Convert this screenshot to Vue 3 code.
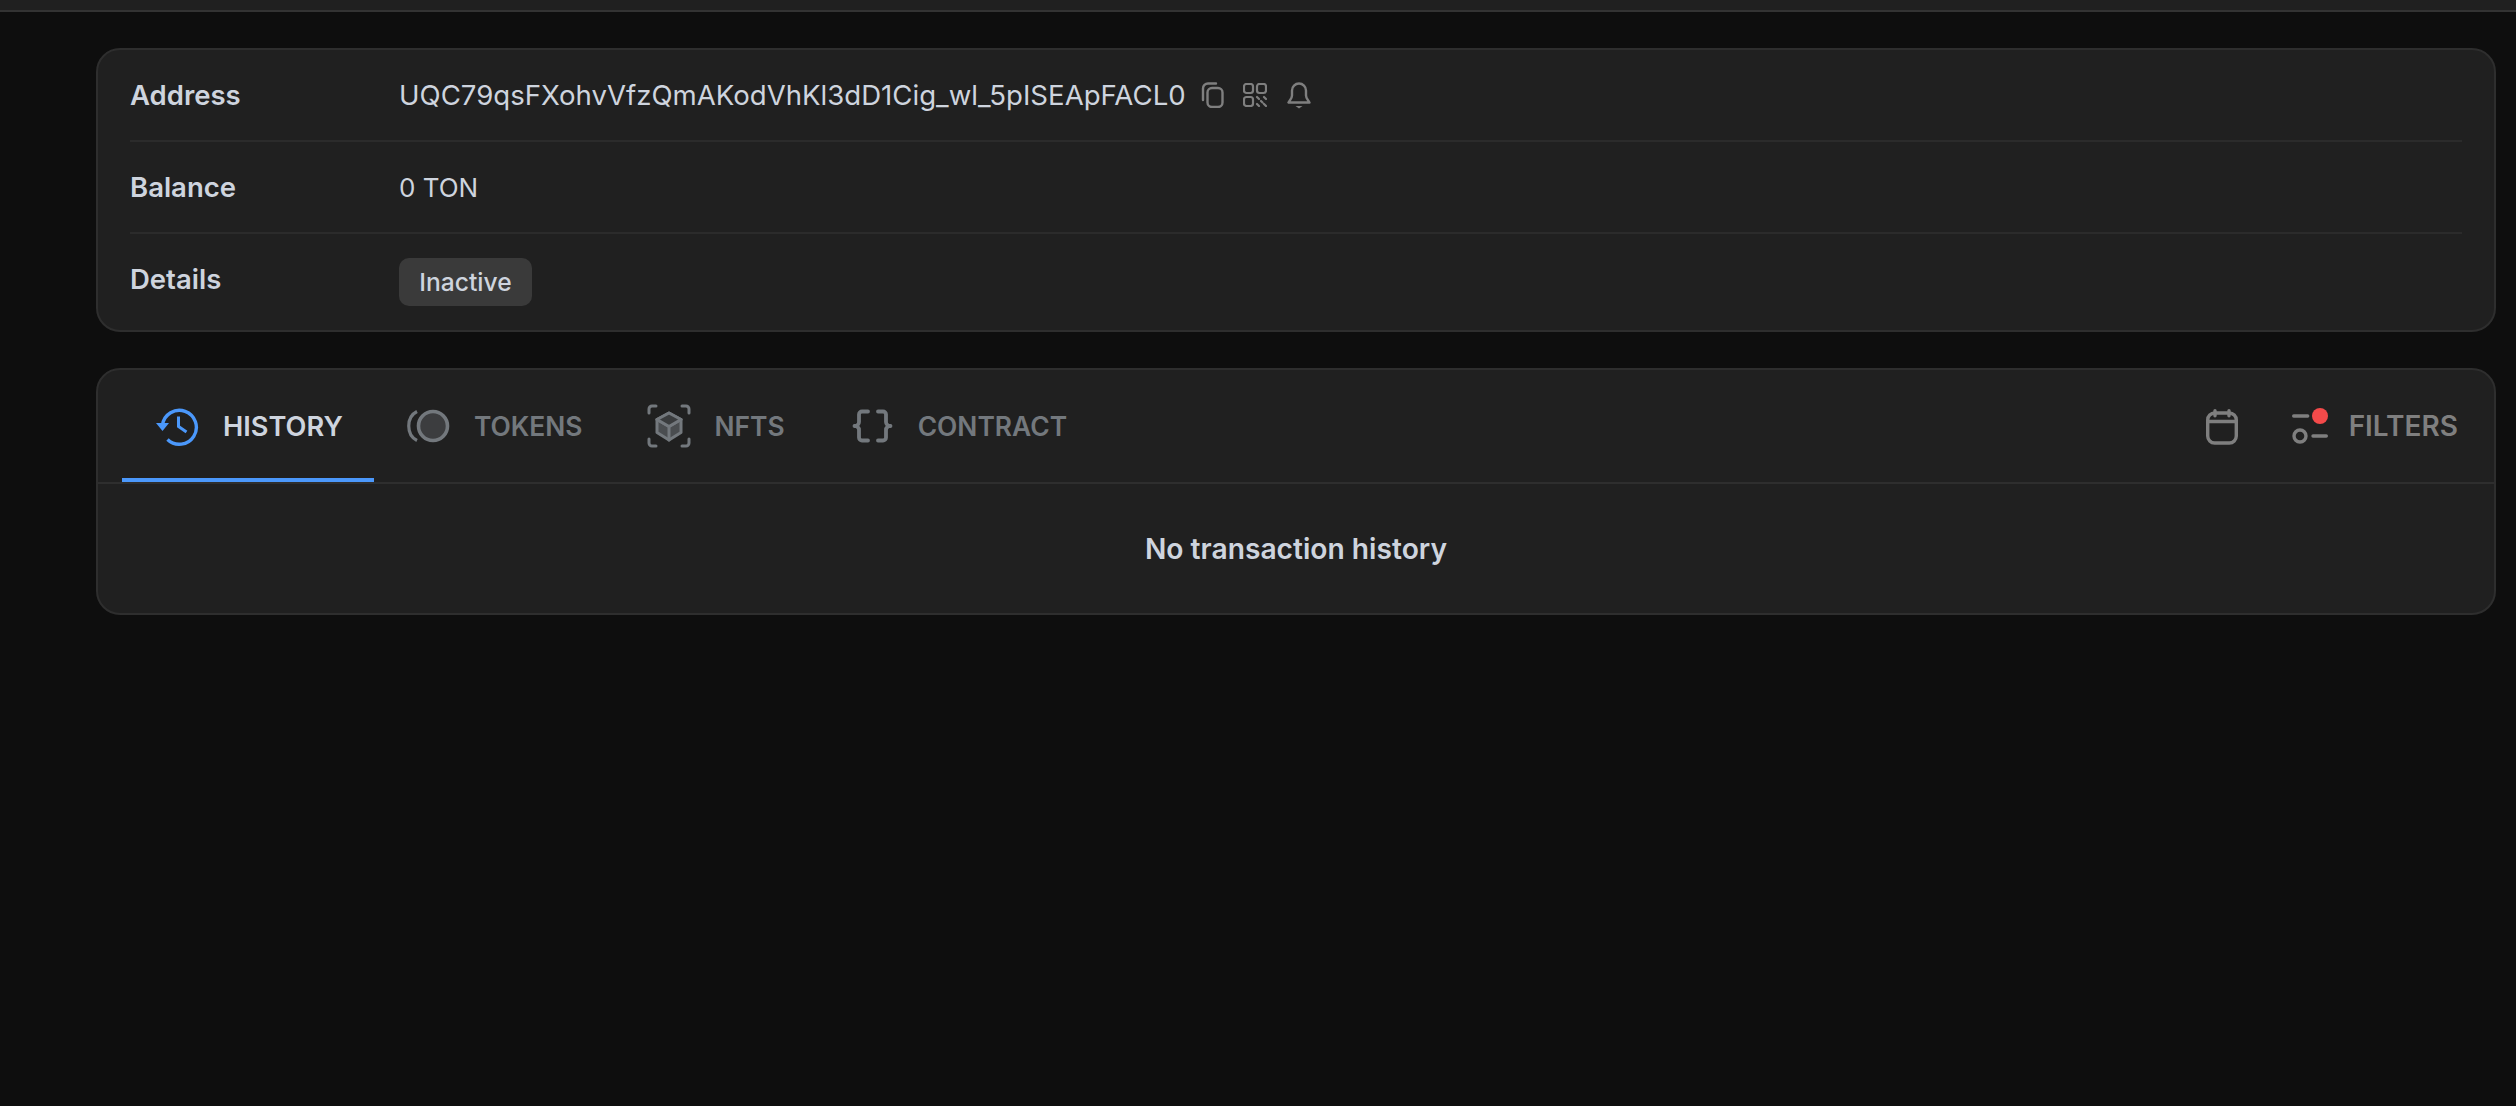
<template>
  <div class="page">
    <div class="topbar"></div>
    <main class="content">
      <section class="card info">
        <div class="row">
          <div class="label">Address</div>
          <div class="value">
            <span>{{ address }}</span>
            <span class="actions">
              <svg class="copy" width="26" height="26" viewBox="0 0 26 26" fill="none" stroke="#7f7f7f" stroke-width="2.4" stroke-linecap="round">
                <rect x="7.5" y="6" width="15" height="19" rx="4.5"/>
                <path d="M3 18V6.500A5 5 0 0 1 8 1.500h8"/>
              </svg>
              <svg class="qr" width="24" height="24" viewBox="0 0 24 24" fill="none" stroke="#7f7f7f" stroke-width="2.2">
                <rect x="1" y="1" width="9" height="9" rx="2.500"/>
                <rect x="14" y="1" width="9" height="9" rx="2.500"/>
                <rect x="1" y="14" width="9" height="9" rx="2.500"/>
                <path d="M14 14l2 2M21 14l2 2M14 21l2 2M21 21l2 2M18 18l1.500 1.500" stroke-linecap="round"/>
              </svg>
              <svg class="bell" width="24" height="27" viewBox="0 0 24 27" fill="none" stroke="#7f7f7f" stroke-width="2.400" stroke-linejoin="round">
                <path d="M12 1.500a7 7 0 0 0-7 7v5c0 3-2 4.500-3.500 7h21c-1.500-2.500-3.500-4-3.500-7v-5a7 7 0 0 0-7-7z"/>
                <path d="M8.500 24h7l-3.500 2.500z" fill="#7f7f7f" stroke="none"/>
              </svg>
            </span>
          </div>
        </div>
        <div class="row">
          <div class="label">Balance</div>
          <div class="value balance">0 TON</div>
        </div>
        <div class="row">
          <div class="label">Details</div>
          <div class="value"><span class="badge">Inactive</span></div>
        </div>
      </section>

      <section class="card history">
        <header class="tabs">
          <div class="tab active">
            <svg class="tab-icon" width="44" height="44" viewBox="0 0 44 44" fill="none" stroke="#4b98fb" stroke-width="3.400">
              <path d="M7.500 21A17 17 0 1 1 12.500 35.500"/>
              <path d="M1 19h13l-6.500 8z" fill="#4b98fb" stroke="none"/>
              <path d="M23.500 12.500v10l8 5.500" stroke-width="3"/>
            </svg>
            <span>HISTORY</span>
          </div>
          <div class="tab">
            <svg class="tab-icon" width="44" height="44" viewBox="0 0 44 44" fill="none" stroke="#73787d">
              <circle cx="27" cy="22" r="14.500" fill="#3c3d3f" stroke-width="3.600"/>
              <path d="M11 7.500C0 13 0 31 11 36.500" stroke-width="3.200"/>
            </svg>
            <span>TOKENS</span>
          </div>
          <div class="tab">
            <svg class="tab-icon" width="44" height="44" viewBox="0 0 44 44" fill="none" stroke="#73787d" stroke-width="3" stroke-linecap="round" stroke-linejoin="round">
              <path d="M2 9V5a3 3 0 0 1 3-3h4M35 2h4a3 3 0 0 1 3 3v4M2 35v4a3 3 0 0 0 3 3h4M42 35v4a3 3 0 0 1-3 3h-4"/>
              <path d="M22 9l12 6.500v13L22 36 10 28.500v-13z" fill="#4a4d50"/>
              <path d="M10 15.500l12 7 12-7M22 22.500V36"/>
              <path d="M22 9l12 6.500-12 7-12-7z" fill="#3a3c3e"/>
            </svg>
            <span>NFTS</span>
          </div>
          <div class="tab contract">
            <svg class="tab-icon" width="44" height="44" viewBox="0 0 44 44" fill="none" stroke="#73787d" stroke-width="3.800" stroke-linecap="round" stroke-linejoin="round">
              <path d="M18 7.500H12a3 3 0 0 0-3 3v7.500a4 4 0 0 1-4.500 4 4 4 0 0 1 4.500 4v7.500a3 3 0 0 0 3 3H18"/>
              <path d="M28 7.500h5a3 3 0 0 1 3 3v7.500a4 4 0 0 0 4.500 4 4 4 0 0 0-4.500 4v7.500a3 3 0 0 1-3 3H28"/>
            </svg>
            <span>CONTRACT</span>
          </div>
          <div class="spacer"></div>
          <svg class="calendar" width="32" height="36" viewBox="0 0 32 36" fill="none" stroke="#7f7f7f" stroke-width="3.400" stroke-linecap="round">
            <rect x="1.700" y="4" width="28.600" height="30" rx="7"/>
            <path d="M1.700 12.500h28.600M9 1.800v5M23 1.800v5"/>
          </svg>
          <div class="filters">
            <span class="filter-icon">
              <svg width="36" height="36" viewBox="0 0 36 36" fill="none" stroke="#7f7f7f" stroke-width="3.400" stroke-linecap="round">
                <path d="M1.700 8h14M21 28h13.300"/>
                <circle cx="8" cy="28" r="6"/>
              </svg>
              <i class="dot"></i>
            </span>
            <span>FILTERS</span>
          </div>
        </header>
        <div class="empty">No transaction history</div>
      </section>
    </main>
  </div>
</template>

<script setup>
const address = 'UQC79qsFXohvVfzQmAKodVhKl3dD1Cig_wl_5pISEApFACL0'
</script>

<style>
html, body { background: #0e0e0e; }
</style>

<style scoped>
.page {
  min-height: 1106px;
  background: #0e0e0e;
  font-family: Inter, "Liberation Sans", sans-serif;
  color: #ced4de;
  overflow: hidden;
}
.topbar {
  height: 10px;
  background: #202020;
  border-bottom: 2px solid #333333;
}
.content {
  width: 2400px;
  margin-left: 96px;
  padding-top: 36px;
  display: flex;
  flex-direction: column;
  gap: 36px;
}
.card {
  background: #202020;
  border: 2px solid #2e2e2e;
  border-radius: 24px;
}
.info { padding: 0 32px; }
.row {
  display: flex;
  align-items: center;
  height: 90px;
  border-bottom: 2px solid #2b2b2b;
}
.row:last-child { height: 96px; border-bottom: 0; }
.label {
  width: 269px;
  font-size: 27.5px;
  font-weight: 600;
}
.row:last-child .label { margin-top: -6px; }
.value {
  display: flex;
  align-items: center;
  font-size: 27.6px;
  font-weight: 400;
}
.value.balance { font-size: 26px; }
.actions {
  display: flex;
  align-items: center;
  margin-left: 14px;
}
.qr { margin-left: 17px; }
.bell { margin-left: 20px; }
.badge {
  display: flex;
  align-items: center;
  justify-content: center;
  width: 133px;
  height: 48px;
  border-radius: 10px;
  background: #3a3a3a;
  font-size: 24.6px;
  font-weight: 500;
}
.tabs {
  display: flex;
  align-items: center;
  height: 112px;
  padding: 0 36px 0 24px;
  border-bottom: 2px solid #2e2e2e;
}
.tab {
  display: flex;
  align-items: center;
  gap: 24px;
  height: 112px;
  padding: 4px 32px 0 32px;
  border-bottom: 4px solid transparent;
  font-size: 26.4px;
  font-weight: 600;
  color: #73787d;
  box-sizing: border-box;
}
.tab.contract { padding-left: 33px; }
.tab-icon { flex: none; }
.tab.active {
  padding-left: 33px;
  padding-right: 31px;
  font-size: 27.2px;
  color: #ced4de;
  border-bottom-color: #4b98fb;
}
.spacer { flex: 1; }
.calendar { margin-right: 54px; margin-top: 2px; }
.filters {
  display: flex;
  align-items: center;
  gap: 21px;
  font-size: 28px;
  font-weight: 600;
  color: #7f7f7f;
}
.filter-icon {
  position: relative;
  display: block;
  width: 36px;
  height: 36px;
}
.dot {
  position: absolute;
  top: 0;
  right: 0;
  width: 16px;
  height: 16px;
  border-radius: 50%;
  background: #f44a4a;
}
.empty {
  display: flex;
  align-items: center;
  justify-content: center;
  height: 129px;
  font-size: 28.2px;
  font-weight: 600;
}
</style>
